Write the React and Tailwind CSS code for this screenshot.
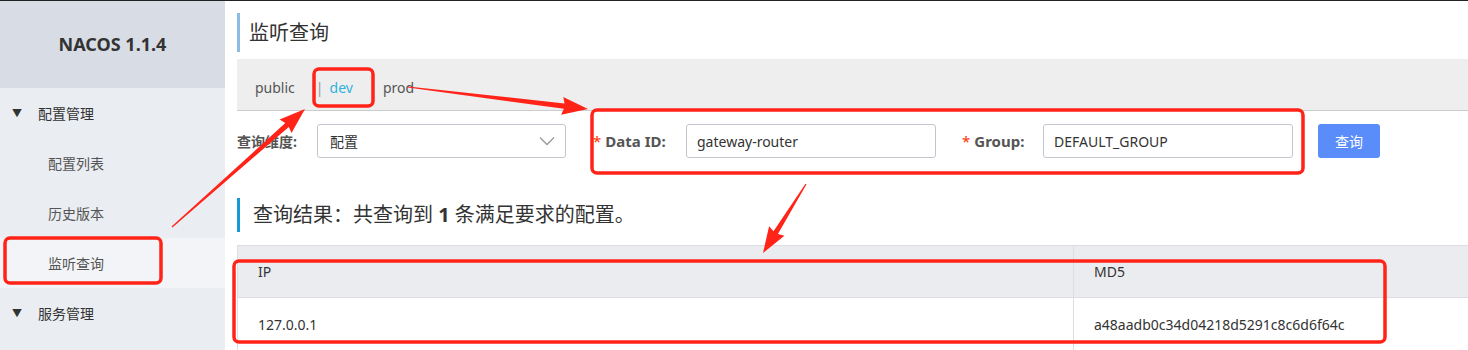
import React from 'react';

const font = { fontFamily: '"Noto Sans", "Noto Sans CJK SC", sans-serif' };

function arrowPoints(x1, y1, x2, y2) {
    const dx = x2 - x1;
    const dy = y2 - y1;
    const len = Math.hypot(dx, dy);
    const ux = dx / len;
    const uy = dy / len;
    const nx = -uy;
    const ny = ux;
    const headLen = 24;
    const headW = 9;
    const shaftW = 2.6;
    const bx = x2 - ux * headLen;
    const by = y2 - uy * headLen;
    const p = [
        [x1 + nx * 0.6, y1 + ny * 0.6],
        [bx + nx * shaftW, by + ny * shaftW],
        [bx + nx * headW - ux * 2, by + ny * headW - uy * 2],
        [x2, y2],
        [bx - nx * headW - ux * 2, by - ny * headW - uy * 2],
        [bx - nx * shaftW, by - ny * shaftW],
        [x1 - nx * 0.6, y1 - ny * 0.6],
    ];
    return p.map(([x, y]) => `${x.toFixed(1)},${y.toFixed(1)}`).join(' ');
}

function Annotations() {
    const red = '#ff2318';
    return (
        <svg className="pointer-events-none absolute left-0 top-0" width="1468" height="350" viewBox="0 0 1468 350">
            <rect x="314" y="68" width="59" height="37" rx="5" fill="none" stroke={red} strokeWidth="3.5" />
            <rect x="592" y="109" width="711" height="63" rx="5" fill="none" stroke={red} strokeWidth="3.5" />
            <rect x="5" y="237" width="156" height="45" rx="5" fill="none" stroke={red} strokeWidth="3.5" />
            <rect x="234" y="260" width="1151" height="81" rx="5" fill="none" stroke={red} strokeWidth="3.5" />
            <polygon points={arrowPoints(172, 226, 305, 108)} fill={red} />
            <polygon points={arrowPoints(408, 86, 588, 108)} fill={red} />
            <polygon points={arrowPoints(806, 183, 763, 252)} fill={red} />
        </svg>
    );
}

function Sidebar() {
    const subItems = ['配置列表', '历史版本', '监听查询'];
    return (
        <div className="flex w-[225px] shrink-0 flex-col bg-[#eaedf1]">
            <div className="flex h-[87px] items-center justify-center bg-[#d8dde5] text-[18px] font-bold text-[#333]">
                NACOS 1.1.4
            </div>
            <div className="flex h-[50px] items-center pl-[12px] text-[14px] text-[#333]">
                <span className="mr-[16px] text-[10px] text-[#333]">▼</span>
                配置管理
            </div>
            {subItems.map((item) => (
                <div
                    key={item}
                    className={
                        item === '监听查询'
                            ? 'flex h-[50px] items-center bg-[#f3f4f7] pl-[48px] text-[14px] text-[#555]'
                            : 'flex h-[50px] items-center pl-[48px] text-[14px] text-[#555]'
                    }
                >
                    {item}
                </div>
            ))}
            <div className="flex h-[50px] items-center pl-[12px] text-[14px] text-[#333]">
                <span className="mr-[16px] text-[10px] text-[#333]">▼</span>
                服务管理
            </div>
        </div>
    );
}

function Field({ label, value, labelWidth }) {
    return (
        <div className="flex items-center">
            <div className={`flex items-center ${labelWidth}`}>
                <span className="mr-[4px] text-[15px] text-[#ff3000]">*</span>
                <span className="text-[15px] font-bold text-[#555]">{label}</span>
            </div>
            <div className="flex h-[34px] w-[250px] items-center rounded-[3px] border border-[#c4c6cf] px-[10px] text-[14px] text-[#333]">
                {value}
            </div>
        </div>
    );
}

export default function App() {
    return (
        <div className="relative h-[350px] w-[1468px] overflow-hidden border-t border-[#1f2326] bg-white" style={font}>
            <div className="flex h-full">
                <Sidebar />
                <div className="flex min-w-0 flex-1 flex-col pl-[12px]">
                    <div className="mt-[12px] flex h-[39px] items-center border-l-[3px] border-[#8cbbe4] pl-[9px] text-[20px] text-[#333]">
                        监听查询
                    </div>

                    <div className="mt-[7px] flex h-[52px] items-center border-b border-[#cccccc] bg-[#eeeeee] pt-[5px] text-[14px]">
                        <span className="ml-[18px] text-[#555]">public</span>
                        <span className="ml-[21px] text-[#999]">|</span>
                        <span className="ml-[6px] text-[#2fb3dc]">dev</span>
                        <span className="ml-[30px] text-[#555]">prod</span>
                    </div>

                    <div className="mt-[13px] flex h-[34px] items-center">
                        <span className="w-[80px] text-[14px] font-bold text-[#555]">查询维度:</span>
                        <div className="flex h-[34px] w-[249px] items-center justify-between rounded-[3px] border border-[#c4c6cf] pl-[12px] pr-[10px] text-[14px] text-[#333]">
                            配置
                            <svg width="16" height="10" viewBox="0 0 16 10" fill="none" stroke="#999" strokeWidth="1.3">
                                <path d="M1 1.5 L8 8.5 L15 1.5" />
                            </svg>
                        </div>
                        <div className="ml-[27px]">
                            <Field label="Data ID:" value="gateway-router" labelWidth="w-[93px]" />
                        </div>
                        <div className="ml-[26px]">
                            <Field label="Group:" value="DEFAULT_GROUP" labelWidth="w-[81px]" />
                        </div>
                        <button className="ml-[25px] h-[34px] w-[62px] rounded-[3px] bg-[#5a8cfa] text-[14px] text-white">
                            查询
                        </button>
                    </div>

                    <div className="mt-[40px] flex h-[34px] items-center border-l-[3px] border-[#159ad6] pl-[13px] text-[20px] text-[#333]">
                        查询结果：共查询到&nbsp;<span className="font-bold">1</span>&nbsp;条满足要求的配置。
                    </div>

                    <div className="mt-[13px] border-t border-l border-[#dcdee3] text-[14px] text-[#333]">
                        <div className="flex h-[52px] items-center border-b border-[#dcdee3] bg-[#ebecf0]">
                            <div className="w-[835px] shrink-0 pl-[20px]">IP</div>
                            <div className="flex h-full items-center border-l border-[#dcdee3] pl-[20px]">MD5</div>
                        </div>
                        <div className="flex h-[52px] items-center">
                            <div className="w-[835px] shrink-0 pl-[20px]">127.0.0.1</div>
                            <div className="flex h-full items-center border-l border-[#dcdee3] pl-[20px]">a48aadb0c34d04218d5291c8c6d6f64c</div>
                        </div>
                    </div>
                </div>
            </div>
            <Annotations />
        </div>
    );
}
